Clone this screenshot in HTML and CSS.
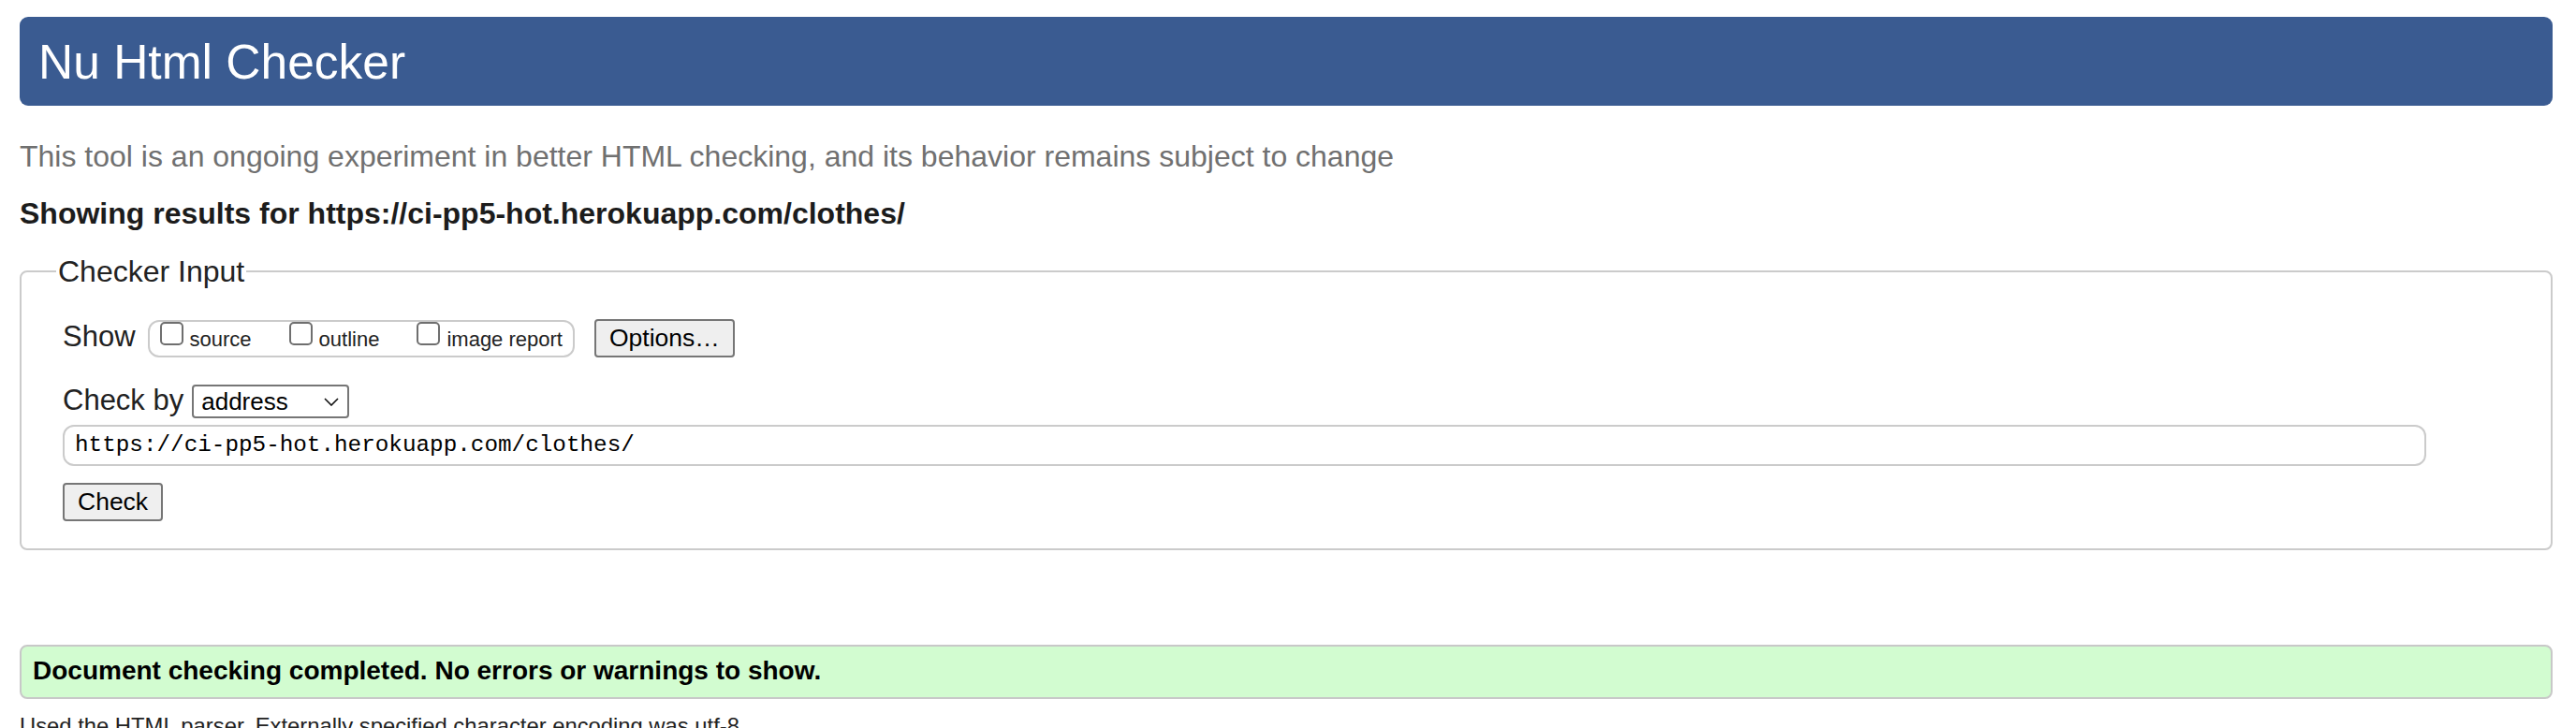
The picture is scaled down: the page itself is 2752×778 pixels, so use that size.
FILE: index.html
```html
<!DOCTYPE html>
<html lang="en">
<head>
<meta charset="utf-8">
<title>Nu Html Checker</title>
<link rel="stylesheet" href="styles.css">
</head>
<body>
<h1 class="title">Nu Html Checker</h1>
<p class="lede">This tool is an ongoing experiment in better HTML checking, and its behavior remains subject to change</p>
<p class="results-for">Showing results for https://ci-pp5-hot.herokuapp.com/clothes/</p>
<form class="checker-form">
  <fieldset class="checker">
    <legend class="checker-legend">Checker Input</legend>
    <div class="row row-show">
      <span class="row-label row-label-show">Show</span>
      <span class="show-group">
        <label class="opt"><input class="cb" type="checkbox">source</label><label class="opt"><input class="cb" type="checkbox">outline</label><label class="opt opt-last"><input class="cb" type="checkbox">image report</label>
      </span>
      <button type="button" class="btn btn-options">Options…</button>
    </div>
    <div class="row row-by">
      <label class="row-label row-label-by">Check by</label>
      <span class="select-wrap">
        <select class="select">
          <option>address</option>
          <option>file upload</option>
          <option>text input</option>
        </select>
        <svg class="chevron" width="16" height="9" viewBox="0 0 16 9" aria-hidden="true"><path d="M1 1 L8 8 L15 1" fill="none" stroke="#111" stroke-width="1.6"/></svg>
      </span>
    </div>
    <div class="row-url">
      <input class="url" type="text" value="https://ci-pp5-hot.herokuapp.com/clothes/">
    </div>
    <div class="row-submit">
      <button type="button" class="btn btn-check">Check</button>
    </div>
  </fieldset>
</form>
<p class="success">Document checking completed. No errors or warnings to show.</p>
<p class="details">Used the HTML parser. Externally specified character encoding was utf-8.</p>
</body>
</html>
```
FILE: styles.css
```css
html, body {
  background: #ffffff;
}
body {
  margin: 0;
  padding: 18px 25px 0 21px;
  font-family: "Liberation Sans", Arial, sans-serif;
  color: #222;
  overflow: hidden;
}
.title {
  margin: 0;
  height: 95px;
  box-sizing: border-box;
  padding: 1px 0 0 20px;
  background: #3a5b91;
  color: #ffffff;
  border-radius: 9px;
  font-size: 51.5px;
  font-weight: normal;
  line-height: 94px;
}
.lede {
  margin: 36px 0 0;
  font-size: 32px;
  line-height: 37px;
  color: #707070;
}
.results-for {
  margin: 24px 0 0;
  font-size: 32px;
  line-height: 36px;
  font-weight: bold;
  color: #1c1c1c;
}
.checker-form {
  margin: 26px 0 0;
}
.checker {
  margin: 0;
  min-width: 0;
  border: 2px solid #cbcbcb;
  border-radius: 8px;
  padding: 33px 44px 29.5px 44px;
}
.checker-legend {
  margin-left: -7px;
  padding: 0 2px;
  font-size: 32px;
  line-height: 36px;
  color: #222;
}
.row {
  display: flex;
  align-items: baseline;
}
.row-label {
  font-size: 31px;
  line-height: 36px;
  color: #222;
}
.row-label-show {
  margin-right: 13px;
}
.row-label-by {
  margin-right: 9px;
}
.show-group {
  display: block;
  border: 2px solid #cbcbcb;
  border-radius: 12px;
  padding: 0 11px;
  font-size: 22px;
  line-height: 34px;
  color: #222;
  white-space: nowrap;
  margin-right: 21px;
}
.opt {
  margin-right: 40px;
}
.opt-last {
  margin-right: 0;
}
.cb {
  -webkit-appearance: none;
  appearance: none;
  display: inline-block;
  box-sizing: border-box;
  width: 25px;
  height: 25px;
  margin: 0 7px 1px 0;
  border: 2px solid #6f6f6f;
  border-radius: 5px;
  background: #ffffff;
  vertical-align: baseline;
}
.btn {
  font-family: "Liberation Sans", Arial, sans-serif;
  font-size: 26.5px;
  line-height: 30px;
  color: #000;
  background: #efefef;
  border: 2px solid #767676;
  border-radius: 4px;
  padding: 3px 14px 4px;
  margin: 0;
}
.row-by {
  margin-top: 28px;
}
.select-wrap {
  position: relative;
  display: inline-block;
}
.select {
  -webkit-appearance: none;
  appearance: none;
  box-sizing: border-box;
  width: 168px;
  height: 36px;
  margin: 0;
  padding: 0 30px 0 8px;
  border: 2px solid #767676;
  border-radius: 4px;
  background: #ffffff;
  font-family: "Liberation Sans", Arial, sans-serif;
  font-size: 26px;
  line-height: 30px;
  color: #000;
}
.chevron {
  position: absolute;
  right: 11px;
  top: 14px;
  pointer-events: none;
}
.row-url {
  margin-top: 6.5px;
}
.url {
  box-sizing: border-box;
  width: calc(100% - 89px);
  height: 44px;
  margin: 0;
  padding: 0 11px;
  border: 2px solid #cbcbcb;
  border-radius: 12px;
  font-family: "Liberation Mono", "DejaVu Sans Mono", monospace;
  font-size: 24.3px;
  color: #000;
  background: #fff;
  outline: none;
}
.row-submit {
  margin-top: 18px;
}
.success {
  margin: 101px 0 0;
  border: 2px solid #c8c8c8;
  border-radius: 8px;
  background: #d2fcd0;
  padding: 10px 12px 12px;
  font-size: 28px;
  line-height: 32px;
  font-weight: bold;
  color: #000;
}
.details {
  margin: 15px 0 0;
  font-size: 23.8px;
  line-height: 27px;
  color: #222;
}
```
